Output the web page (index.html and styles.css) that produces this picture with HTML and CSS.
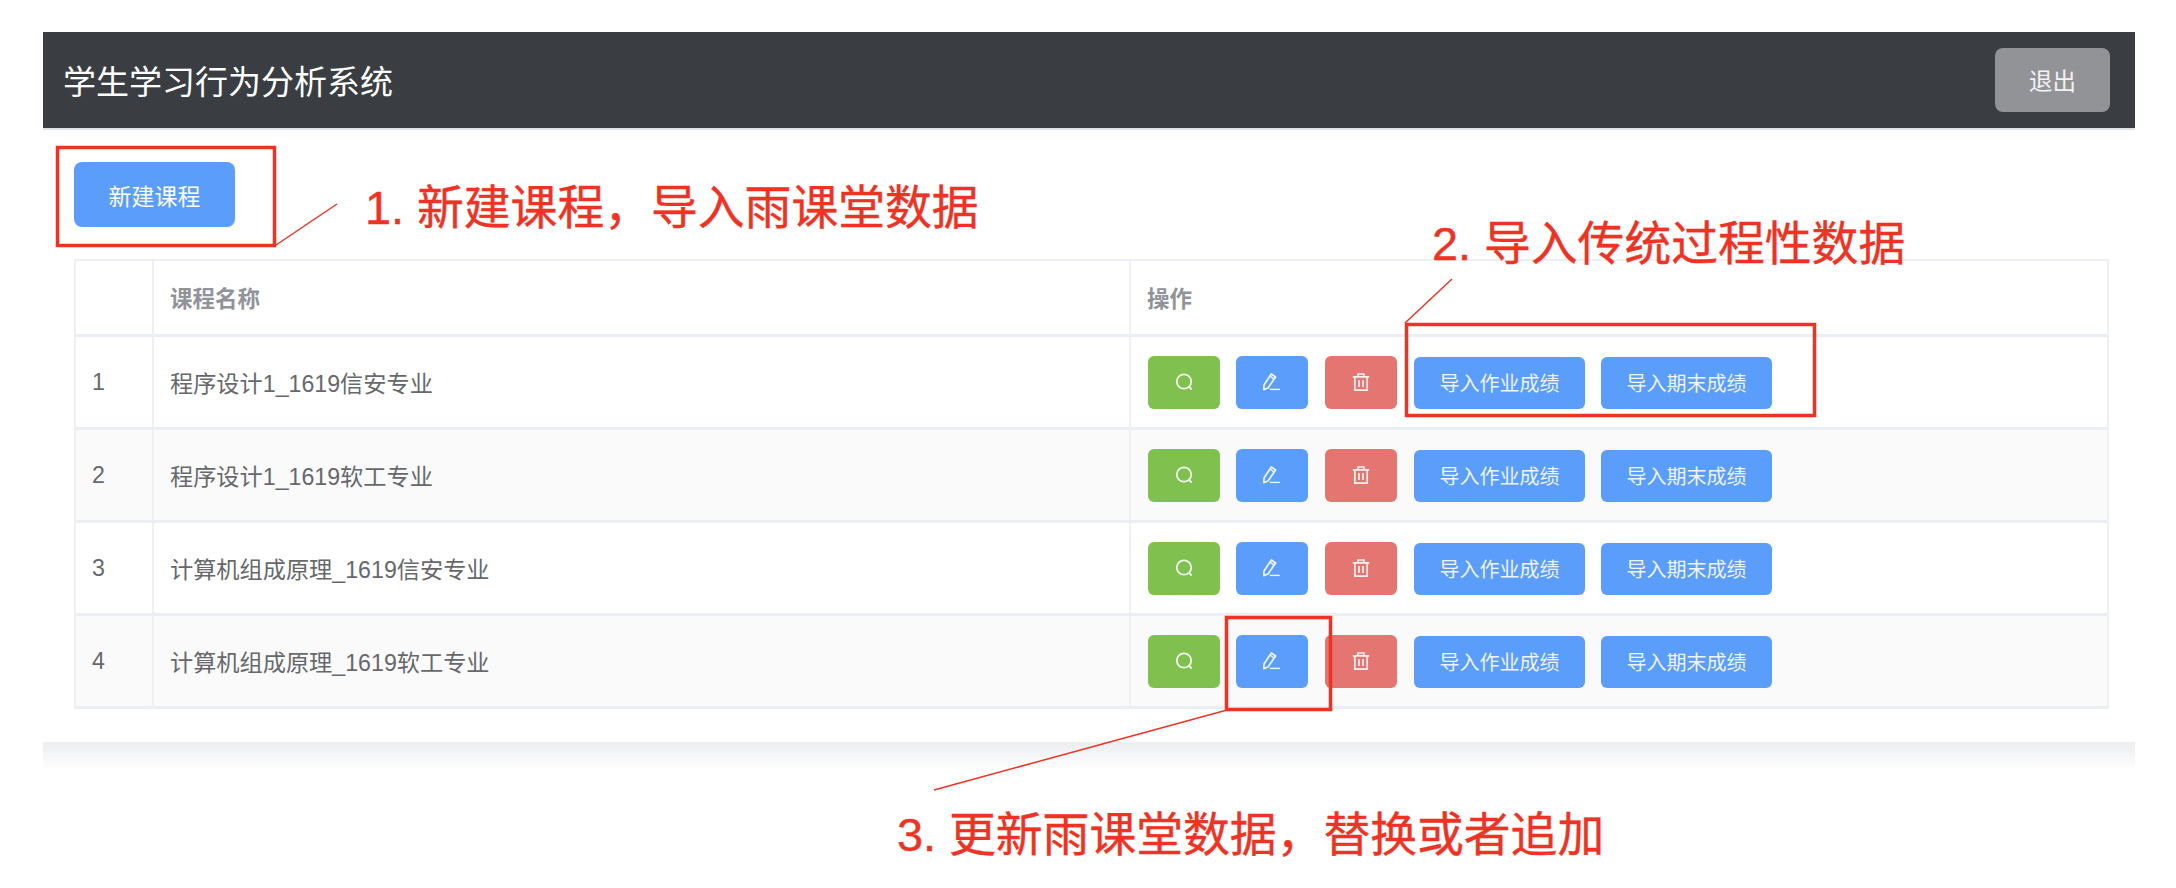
FILE: index.html
```html
<!DOCTYPE html>
<html lang="zh-CN">
<head>
<meta charset="utf-8">
<title>学生学习行为分析系统</title>
<link rel="stylesheet" href="styles.css">
</head>
<body>
<svg class="defs" width="0" height="0" aria-hidden="true">
  <symbol id="i-search" viewBox="0 0 18 18">
    <circle cx="9" cy="8.5" r="7.2" fill="none" stroke="currentColor" stroke-width="1.8"/>
    <path d="M14 13.6l2.6 3" fill="none" stroke="currentColor" stroke-width="1.8"/>
  </symbol>
  <symbol id="i-edit" viewBox="0 0 18 18">
    <path d="M1 12L8.3 1l4.3 3-7.6 11-4.2 1.6z" fill="none" stroke="currentColor" stroke-width="1.7" stroke-linejoin="round"/>
    <path d="M7 3.2l4.2 2.9" fill="none" stroke="currentColor" stroke-width="1.4"/>
    <path d="M6.7 16.4h10.2" fill="none" stroke="currentColor" stroke-width="1.4"/>
  </symbol>
  <symbol id="i-trash" viewBox="0 0 18 18">
    <path d="M.8 3.9h16.4M6 3.9V1h6v2.9" fill="none" stroke="currentColor" stroke-width="1.6"/>
    <path d="M2.8 3.9v13.3h12.4V3.9" fill="none" stroke="currentColor" stroke-width="1.7"/>
    <path d="M7 7v7M11 7v7" fill="none" stroke="currentColor" stroke-width="1.7"/>
  </symbol>
</svg>

<div class="page">
  <header class="topbar">
    <h1 class="title">学生学习行为分析系统</h1>
    <button class="btn btn-exit">退出</button>
  </header>

  <main class="card">
    <button class="btn btn-new">新建课程</button>
    <table class="courses">
      <colgroup><col class="col-no"><col class="col-name"><col></colgroup>
      <thead>
        <tr><th></th><th>课程名称</th><th>操作</th></tr>
      </thead>
      <tbody>
        <tr>
          <td>1</td><td>程序设计1_1619信安专业</td>
          <td><div class="ops">
            <button class="btn btn-icon green"><svg class="icon"><use href="#i-search"/></svg></button>
            <button class="btn btn-icon blue"><svg class="icon"><use href="#i-edit"/></svg></button>
            <button class="btn btn-icon red"><svg class="icon"><use href="#i-trash"/></svg></button>
            <button class="btn btn-import">导入作业成绩</button>
            <button class="btn btn-import">导入期末成绩</button>
          </div></td>
        </tr>
        <tr>
          <td>2</td><td>程序设计1_1619软工专业</td>
          <td><div class="ops">
            <button class="btn btn-icon green"><svg class="icon"><use href="#i-search"/></svg></button>
            <button class="btn btn-icon blue"><svg class="icon"><use href="#i-edit"/></svg></button>
            <button class="btn btn-icon red"><svg class="icon"><use href="#i-trash"/></svg></button>
            <button class="btn btn-import">导入作业成绩</button>
            <button class="btn btn-import">导入期末成绩</button>
          </div></td>
        </tr>
        <tr>
          <td>3</td><td>计算机组成原理_1619信安专业</td>
          <td><div class="ops">
            <button class="btn btn-icon green"><svg class="icon"><use href="#i-search"/></svg></button>
            <button class="btn btn-icon blue"><svg class="icon"><use href="#i-edit"/></svg></button>
            <button class="btn btn-icon red"><svg class="icon"><use href="#i-trash"/></svg></button>
            <button class="btn btn-import">导入作业成绩</button>
            <button class="btn btn-import">导入期末成绩</button>
          </div></td>
        </tr>
        <tr>
          <td>4</td><td>计算机组成原理_1619软工专业</td>
          <td><div class="ops">
            <button class="btn btn-icon green"><svg class="icon"><use href="#i-search"/></svg></button>
            <button class="btn btn-icon blue"><svg class="icon"><use href="#i-edit"/></svg></button>
            <button class="btn btn-icon red"><svg class="icon"><use href="#i-trash"/></svg></button>
            <button class="btn btn-import">导入作业成绩</button>
            <button class="btn btn-import">导入期末成绩</button>
          </div></td>
        </tr>
      </tbody>
    </table>
  </main>
  <div class="card-shadow"></div>

  <svg class="marks" viewBox="0 0 2176 888" aria-hidden="true">
    <rect x="57.5" y="147.5" width="217" height="98"/>
    <line x1="276" y1="245" x2="337" y2="204"/>
    <rect x="1406.5" y="324.5" width="408" height="91"/>
    <line x1="1405" y1="323" x2="1452" y2="279"/>
    <rect x="1226.5" y="617.5" width="104" height="92"/>
    <line x1="1227" y1="710" x2="934" y2="790"/>
  </svg>
  <p class="note note-1">1. 新建课程，导入雨课堂数据</p>
  <p class="note note-2">2. 导入传统过程性数据</p>
  <p class="note note-3">3. 更新雨课堂数据，替换或者追加</p>
</div>
</body>
</html>
```

FILE: styles.css
```css
* { box-sizing: border-box; }

html, body {
  margin: 0;
  background: #fff;
}

body {
  font-family: "Liberation Sans", "Noto Sans CJK SC", sans-serif;
  overflow: hidden;
}

.defs { position: absolute; }

.page {
  position: relative;
  width: 2176px;
  height: 888px;
  padding: 32px 41px 0 43px;
}

.topbar {
  display: flex;
  align-items: center;
  justify-content: space-between;
  height: 98px;
  padding: 0 25px 0 20px;
  background: #3a3e42;
  border-bottom: 2px solid #dfe2e8;
}

.title {
  margin: 0;
  font-size: 33px;
  font-weight: 400;
  color: #fff;
}

.btn {
  border: 0;
  padding: 0;
  font-family: inherit;
  color: #fff;
  border-radius: 6px;
}

.btn-exit {
  width: 115px;
  height: 64px;
  font-size: 23.5px;
  background: #929397;
  border-radius: 8px;
  color: #f2f2f2;
}

.card {
  height: 612px;
  padding: 32px 26px 0 31px;
  background: #fff;
}

.btn-new {
  display: block;
  width: 161px;
  height: 65px;
  font-size: 23px;
  background: #5b9dfb;
  border-radius: 8px;
}

.courses {
  width: 2035px;
  margin-top: 32px;
  table-layout: fixed;
  border-spacing: 0;
  border-top: 2px solid #eef0f6;
  border-left: 2px solid #eef0f6;
  border-right: 2px solid #eef0f6;
  font-size: 23.2px;
  color: #66686c;
}

.col-no { width: 76px; }
.col-name { width: 977px; }

.courses th,
.courses td {
  padding: 0 0 0 16px;
  border-bottom: 3px solid #ebeef5;
  text-align: left;
}

.courses th + th,
.courses td + td {
  border-left: 2px solid #eef0f6;
}

.courses th {
  height: 76px;
  padding-bottom: 2px;
  font-size: 22.5px;
  font-weight: 700;
  color: #909399;
}

.courses td {
  height: 93px;
}

.courses tbody tr:nth-child(even) td {
  background: #fafafa;
}

.ops {
  display: flex;
  align-items: flex-end;
  padding-left: 1px;
}

.btn-icon {
  display: flex;
  align-items: center;
  justify-content: center;
  width: 72px;
  height: 53px;
  margin-right: 17px;
  color: #fff;
}

.btn-icon.green { margin-right: 16px; }

.icon {
  width: 18px;
  height: 18px;
  opacity: .9;
}

.green { background: #7fc04f; }
.blue { background: #5b9dfb; }
.red { background: #e57571; }

.btn-import {
  width: 171px;
  height: 52px;
  margin-right: 16px;
  font-size: 20px;
  background: #5b9dfb;
  color: #eef4ff;
}

.card-shadow {
  height: 28px;
  border-top: 1px solid #eef0f4;
  background: linear-gradient(#eceef0, #fff);
}

.marks {
  position: absolute;
  inset: 0;
  width: 2176px;
  height: 888px;
  pointer-events: none;
}

.marks rect {
  fill: none;
  stroke: #ee3224;
  stroke-width: 3.5;
}

.marks line {
  stroke: #ee3224;
  stroke-width: 1.5;
}

.note {
  position: absolute;
  margin: 0;
  font-size: 46.8px;
  line-height: 60px;
  white-space: nowrap;
  color: #ee3224;
  -webkit-text-stroke: .4px #ee3224;
}

.note-1 { left: 365px; top: 178px; }
.note-2 { left: 1432px; top: 214px; }
.note-3 { left: 897px; top: 805px; }
```
